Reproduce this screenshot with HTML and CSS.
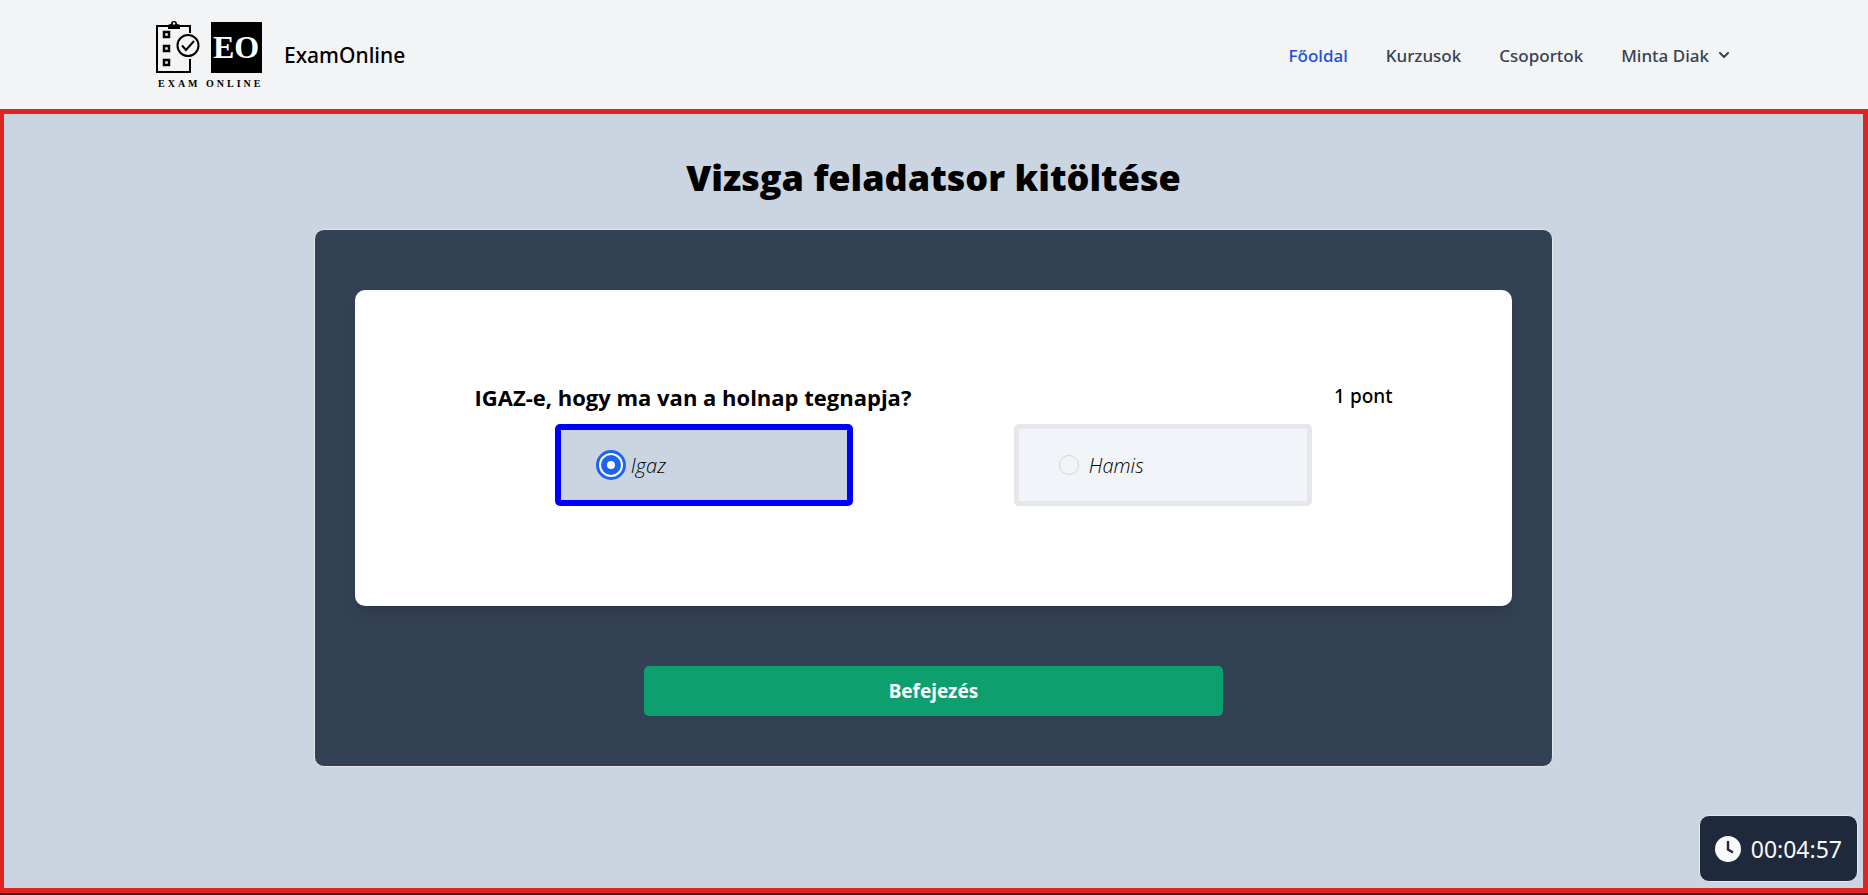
FILE: index.html
```html
<!DOCTYPE html>
<html lang="hu">
<head>
<meta charset="utf-8">
<meta name="viewport" content="width=device-width, initial-scale=1">
<title>ExamOnline</title>
<link rel="stylesheet" href="styles.css">
</head>
<body>
<header class="header">
  <a class="brand" href="#">
    <svg class="logo" width="110" height="70" viewBox="0 0 110 70" aria-hidden="true">
      <g fill="none" stroke="#000" stroke-width="2">
        <path d="M36 13V6H3V52H36V39"/>
        <path stroke-width="2.500" d="M10 12h5v5h-5zM10 26h5v5h-5zM10 40h5v5h-5z"/>
        <circle cx="34" cy="25.500" r="10.500"/>
        <path d="M28 25.500l4 4.500 8-9"/>
      </g>
      <path d="M14 9V6q0-2 3-2 0-3 3-3t3 3q3 0 3 2v3z"/>
      <circle cx="20" cy="3.500" r="1.200" fill="#f3f4f6"/>
      <path d="M57 2h51v51H57z"/>
      <text class="logo-mark" x="82" y="38" text-anchor="middle">EO</text>
      <text class="logo-caption" x="4" y="67">EXAM ONLINE</text>
    </svg>
    <span class="brand-name">ExamOnline</span>
  </a>
  <nav class="nav">
    <a class="nav-link active" href="#">Főoldal</a>
    <a class="nav-link" href="#">Kurzusok</a>
    <a class="nav-link" href="#">Csoportok</a>
    <button class="nav-link user" type="button">Minta Diak
      <svg width="10" height="6" viewBox="0 0 10 6" fill="none" stroke="currentColor" stroke-width="2" stroke-linecap="round" stroke-linejoin="round" aria-hidden="true"><path d="M1 1l4 4 4-4"/></svg>
    </button>
  </nav>
</header>
<main class="exam">
  <h1 class="title">Vizsga feladatsor kitöltése</h1>
  <form class="panel">
    <fieldset class="card">
      <div class="question">
        <h2 class="question-text" id="q1">IGAZ-e, hogy ma van a holnap tegnapja?</h2>
        <span class="points">1 pont</span>
      </div>
      <div class="options" role="radiogroup" aria-labelledby="q1">
        <label class="option selected"><input class="radio" type="radio" name="q1" value="igaz" checked>Igaz</label>
        <label class="option"><input class="radio" type="radio" name="q1" value="hamis">Hamis</label>
      </div>
    </fieldset>
    <button class="finish" type="button">Befejezés</button>
  </form>
</main>
<div class="timer" role="timer">
  <svg width="26" height="26" viewBox="0 0 26 26" aria-hidden="true"><circle cx="13" cy="13" r="13" fill="#f8fafc"/><path d="M13 5v8.500l5 3" fill="none" stroke="#1e293b" stroke-width="2.400"/></svg>
  <span>00:04:57</span>
</div>
</body>
</html>
```
FILE: styles.css
```css
*,
*::before,
*::after {
  box-sizing: border-box;
}

body {
  margin: 0;
  min-height: 100vh;
  display: flex;
  flex-direction: column;
  border-bottom: 2px solid #331c1c;
  background: #cbd5e1;
  color: #000;
  font-family: "Noto Sans", "Open Sans", sans-serif;
  font-size: 18px;
}

.header {
  display: flex;
  align-items: center;
  justify-content: space-between;
  padding: 20px 139px 19px 154px;
  background: #f3f4f6;
}

.brand {
  display: flex;
  align-items: center;
  gap: 20px;
  color: inherit;
  text-decoration: none;
}

.logo {
  display: block;
}

.logo-mark {
  fill: #fff;
  font: bold 32px "Liberation Serif", serif;
}

.logo-caption {
  font: bold 10px "Liberation Serif", serif;
  letter-spacing: 3px;
}

.brand-name {
  font-size: 21px;
  font-weight: 500;
}

.nav {
  display: flex;
  align-items: center;
  gap: 38px;
}

.nav-link {
  padding: 0;
  border: 0;
  background: none;
  color: #374151;
  font: 500 17px "Noto Sans", "Open Sans", sans-serif;
  text-decoration: none;
}

.active {
  color: #1d4ed8;
}

.user {
  display: flex;
  align-items: center;
  gap: 10px;
}

.exam {
  flex: 1;
  display: flex;
  flex-direction: column;
  align-items: center;
  padding: 41px 0 40px;
  border: 5px solid #e02424;
  border-left-width: 4px;
}

.title {
  margin: 0 0 29px;
  font-family: "Open Sans", "Noto Sans", sans-serif;
  font-size: 36px;
  font-weight: 800;
  line-height: 45px;
}

.panel {
  display: flex;
  flex-direction: column;
  align-items: center;
  width: 66.7%;
  padding: 60px 40px 50px;
  border: 1px solid #e5e7eb;
  border-radius: 10px;
  background: #334155;
}

.card {
  width: 100%;
  margin: 0 0 60px;
  padding: 90px 120px 100px;
  border: 0;
  border-radius: 10px;
  background: #fff;
  box-shadow: 0 10px 15px -3px rgba(0, 0, 0, 0.1), 0 4px 6px -4px rgba(0, 0, 0, 0.1);
}

.question {
  display: flex;
  justify-content: space-between;
  line-height: 34px;
}

.question-text {
  margin: 0 0 10px;
  font-family: "Open Sans", "Noto Sans", sans-serif;
  font-size: 22px;
  font-weight: 700;
}

.points {
  font-size: 19px;
  font-weight: 500;
  line-height: 32px;
}

.options {
  display: grid;
  grid-template-columns: 1fr 1fr;
  justify-items: center;
}

.option {
  display: flex;
  align-items: center;
  gap: 10px;
  width: 65%;
  height: 82px;
  padding: 0 40px;
  border: 5px solid #e5e7eb;
  border-radius: 5px;
  background: #f1f5f9;
  color: #000;
  font-family: "Open Sans", "Noto Sans", sans-serif;
  font-size: 20px;
  font-style: italic;
  font-weight: 300;
}

.selected {
  border: 6px solid #00f;
  background: #cbd5e1;
}

.radio {
  appearance: none;
  width: 20px;
  height: 20px;
  margin: 0;
  border: 1px solid #d1d5db;
  border-radius: 50%;
  background: #f3f4f6;
}

.radio:checked {
  border: 6px solid #1c64f2;
  background: #fff;
  box-shadow: 0 0 0 2px #fff, 0 0 0 5px #1c64f2;
}

.finish {
  width: 50%;
  height: 50px;
  border: 0;
  border-radius: 5px;
  background: #0e9f6e;
  color: #fff;
  font: 700 19px "Noto Sans", "Open Sans", sans-serif;
}

.timer {
  position: fixed;
  right: 10px;
  bottom: 13px;
  display: flex;
  align-items: center;
  gap: 10px;
  height: 67px;
  padding: 0 15px 0 15px;
  border: 1px solid #e5e7eb;
  border-radius: 10px;
  background: #1e293b;
  color: #f8fafc;
  font-size: 23px;
}
```
